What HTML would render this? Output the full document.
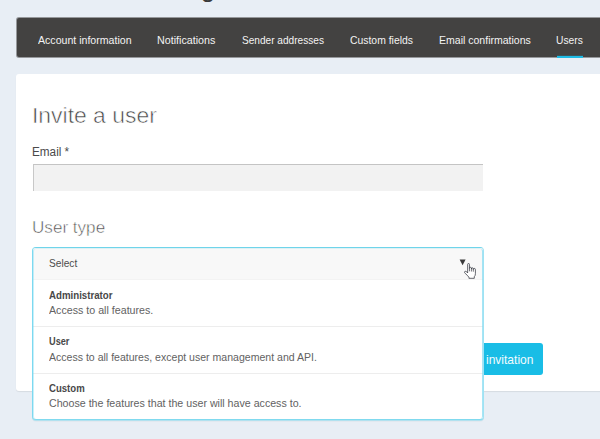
<!DOCTYPE html>
<html>
<head>
<meta charset="utf-8">
<title>Invite a user</title>
<style>
html,body{margin:0;padding:0;}
body{width:600px;height:439px;overflow:hidden;background:#e8eef5;font-family:"Liberation Sans",sans-serif;position:relative;color:#424242;}
.abs{position:absolute;}
.t{position:absolute;display:block;white-space:nowrap;line-height:20px;height:20px;transform-origin:0 0;margin:0;font-weight:normal;}
#title{left:37.5px;top:-27px;font-size:26px;line-height:30px;color:#3a3a3a;white-space:nowrap;margin:0;}
#nav{left:17px;top:18px;width:600px;height:39px;background:#434241;border-radius:2px;box-shadow:0 0 0 1px rgba(67,66,65,.5);}
#nav .ul{position:absolute;left:540px;top:38px;width:26px;height:2px;background:#1ebbe5;box-shadow:0 -1px 0 rgba(30,187,229,.15);}
#panel{left:16px;top:73.6px;width:600px;height:317px;background:#fff;border-radius:3px;box-shadow:0 1px 1px rgba(0,0,0,.08);}
#inp{left:33px;top:164px;width:450px;height:27px;background:#f2f2f2;border-top:1px solid #c4c4c4;border-left:1px solid #c8c8c8;box-sizing:border-box;}
#dd{left:32px;top:247px;width:452px;height:173px;box-sizing:border-box;border:1px solid #7cd9f0;border-top-color:#6fd4ea;border-right-color:#9fe2f3;border-bottom-color:#80daef;border-radius:4px;background:#fff;overflow:hidden;box-shadow:0 1px 0 rgba(128,218,239,.5),0 2px 0 rgba(0,0,0,.025);}
#dd:after{content:"";position:absolute;left:0;top:0;right:0;bottom:0;border-left:1px solid rgba(124,217,240,.42);border-right:1px solid rgba(124,217,240,.68);border-top:1px solid rgba(111,212,234,.18);border-radius:3px;}
#sel{position:absolute;left:0;top:0;width:450px;height:31px;background:#f8f8f8;border-bottom:1px solid #f3f3f3;}
#arrow{left:459px;top:259px;}
.sep{position:absolute;left:0;width:450px;height:1px;background:#ededed;}
#btn{left:484px;top:343.2px;width:59.3px;height:31.7px;background:#19bde6;border-radius:0 3px 3px 0;}
#cursor{left:464px;top:263px;}
</style>
</head>
<body>
<div class="abs" id="title">Account settings</div>
<div class="abs" id="nav"><div class="ul"></div></div>
<span class="t" style="left:38.3px;top:30.39px;font-size:11px;color:#f3f3f3;transform:scaleX(0.9619);">Account information</span>
<span class="t" style="left:157.33px;top:30.39px;font-size:11px;color:#f3f3f3;transform:scaleX(0.9729);">Notifications</span>
<span class="t" style="left:242.0px;top:30.39px;font-size:11px;color:#f3f3f3;transform:scaleX(0.918);">Sender addresses</span>
<span class="t" style="left:349.7px;top:30.39px;font-size:11px;color:#f3f3f3;transform:scaleX(0.9448);">Custom fields</span>
<span class="t" style="left:438.54px;top:30.39px;font-size:11px;color:#f3f3f3;transform:scaleX(0.9568);">Email confirmations</span>
<span class="t" style="left:555.87px;top:30.39px;font-size:11px;color:#f3f3f3;transform:scaleX(0.9321);">Users</span>
<div class="abs" id="panel"></div>
<h1 class="t" style="left:31.82px;top:106.38px;font-size:22px;color:#444;transform:scaleX(1.041);-webkit-text-stroke:0.6px #fff;">Invite a user</h1>
<label class="t" style="left:31.82px;top:141.54px;font-size:12px;color:#4a4a4a;transform:scaleX(0.9784);">Email *</label>
<div class="abs" id="inp"></div>
<h2 class="t" style="left:32.01px;top:216.91px;font-size:17.3px;color:#484848;transform:scaleX(0.9889);-webkit-text-stroke:0.55px #fff;">User type</h2>
<div class="abs" id="btn"></div>
<span class="t" style="left:485.98px;top:349.7px;font-size:13px;color:#f2fbfe;transform:scaleX(0.924);">invitation</span>
<div class="abs" id="dd">
<div id="sel"></div>
<div class="sep" style="top:78px"></div>
<div class="sep" style="top:125px"></div>
</div>
<span class="t" style="left:48.7px;top:252.99px;font-size:11px;color:#4c4c4c;transform:scaleX(0.9226);">Select</span>
<span class="t" style="left:49.3px;top:284.79px;font-size:11px;font-weight:bold;color:#484848;transform:scaleX(0.8806);">Administrator</span>
<span class="t" style="left:49.0px;top:300.09px;font-size:11px;color:#626262;transform:scaleX(0.9692);">Access to all features.</span>
<span class="t" style="left:49.1px;top:331.19px;font-size:11px;font-weight:bold;color:#484848;transform:scaleX(0.836);">User</span>
<span class="t" style="left:49.0px;top:346.59px;font-size:11px;color:#626262;transform:scaleX(0.9588);">Access to all features, except user management and API.</span>
<span class="t" style="left:49.0px;top:377.79px;font-size:11px;font-weight:bold;color:#484848;transform:scaleX(0.872);">Custom</span>
<span class="t" style="left:49.0px;top:393.49px;font-size:11px;color:#626262;transform:scaleX(0.9673);">Choose the features that the user will have access to.</span>
<svg class="abs" id="arrow" width="10" height="10" viewBox="0 0 10 10"><polygon points="0.6,0.4 6.6,0.4 3.6,6.2" fill="#3a3a3a"/></svg>
<svg class="abs" id="cursor" width="14" height="18" viewBox="0 0 14 18">
<path d="M3.65 9.9 V1.5 Q3.65 0.45 4.55 0.45 Q5.45 0.45 5.45 1.5 V5.5 Q5.6 4.3 6.5 4.3 Q7.4 4.3 7.4 5.5 V6 Q7.5 4.8 8.4 4.8 Q9.3 4.8 9.3 6 V6.6 Q9.4 5.4 10.3 5.4 Q11.4 5.4 11.4 6.7 V10.6 Q11.4 12.6 10.3 13.7 V15.3 H4.9 V14.2 Q3.5 12.3 1.3 10.5 Q-0.1 9.2 0.8 8.5 Q1.7 7.9 2.8 8.9 Z" fill="#fff" stroke="#23252f" stroke-width=".7" stroke-linejoin="round"/>
<path d="M5.45 5.5V8.3M7.4 6V8.5M9.3 6.6V8.7" stroke="#23252f" stroke-width=".65" fill="none"/>
</svg>
</body>
</html>
